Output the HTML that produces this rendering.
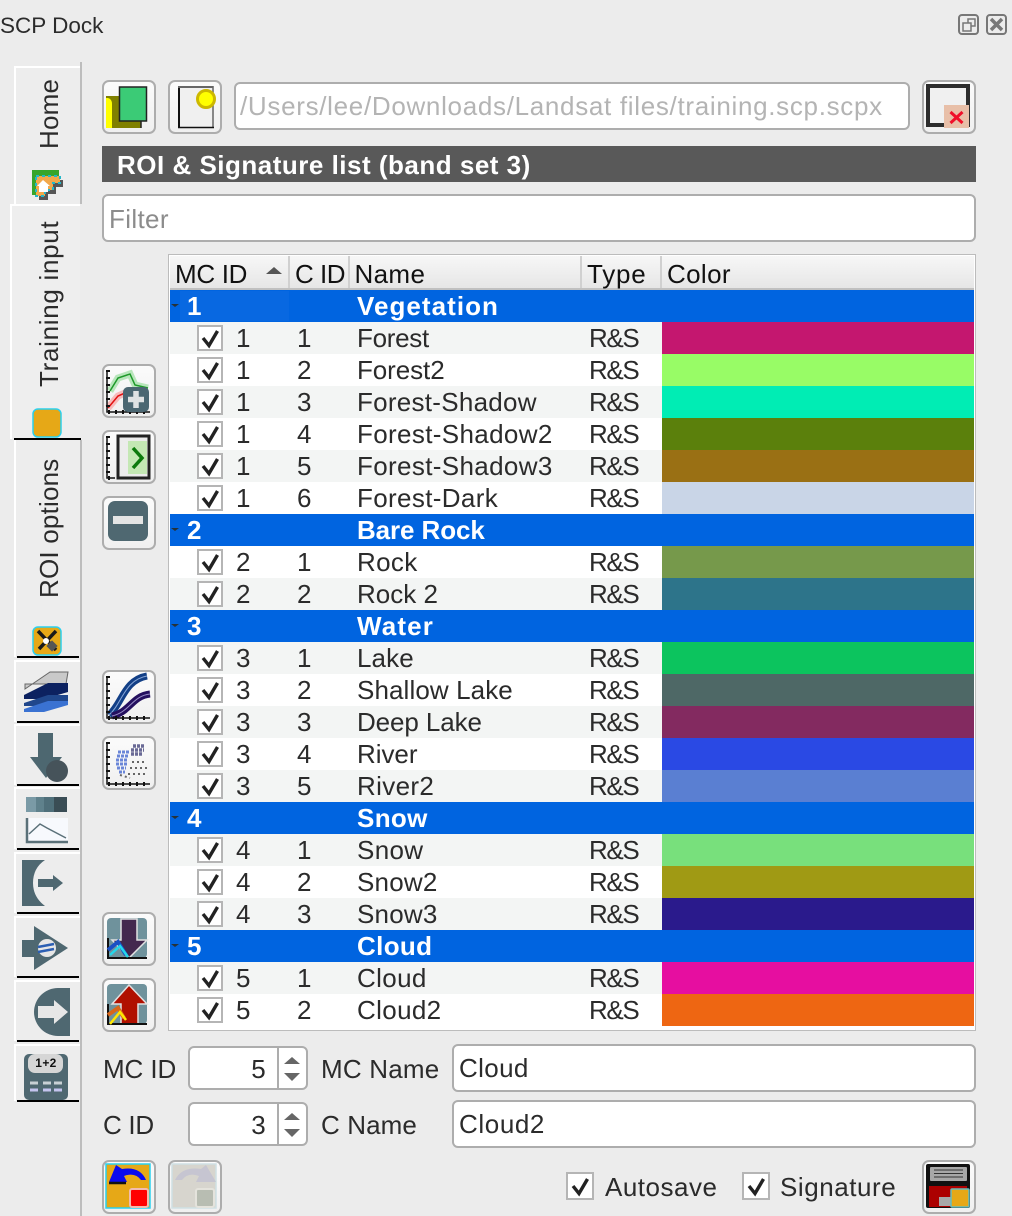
<!DOCTYPE html>
<html><head><meta charset="utf-8"><style>
html,body{margin:0;padding:0}
body{width:1012px;height:1216px;overflow:hidden;background:#ececec;position:relative;font-family:"Liberation Sans",sans-serif;font-size:26px;color:#2b2b2b;letter-spacing:.35px}
.a{position:absolute}
.btn{position:absolute;width:50px;height:50px;border:2px solid #adadad;border-radius:7px;background:linear-gradient(#fbfbfb,#f0f0f0)}
.in{position:absolute;box-sizing:border-box;border:2px solid #adadad;border-radius:6px;background:#fff;line-height:44px;padding-left:5px;color:#2b2b2b}
.r{position:absolute;left:170px;width:804px;height:32px;line-height:32px}
.r span{position:absolute;white-space:pre}
.g{background:#f3f5f4}.w{background:#fff}
.h{background:#0064e0;color:#fff;font-weight:bold}
.m{left:66px}.c{left:127px}.n{left:187px}.t{left:419px;letter-spacing:-1.4px}
.h .m{left:17px}
.k{left:492px;width:312px;height:32px}
.x{left:27px;top:3px;width:22px;height:22px;border:2px solid #b5b5b5;background:#fff}
.ck{position:absolute;box-sizing:border-box;width:28px;height:28px;border:2px solid #b5b5b5;background:#fff}
.hd{position:absolute;top:258px;line-height:32px;color:#111;white-space:pre}
.v{position:absolute;writing-mode:vertical-rl;transform:rotate(180deg);white-space:pre;line-height:30px}
.tab{position:absolute;box-sizing:border-box;border-left:2px solid #fff;border-top:2px solid #fff;background:#ededed}
.ln{position:absolute;height:2px;background:#000}
</style></head><body>
<div class="a" style="left:0;top:12px;font-size:22.5px;line-height:28px;letter-spacing:0">SCP Dock</div>

<!-- side tabs -->
<div class="tab" style="left:14px;top:66px;width:66px;height:138px"></div>
<div class="tab" style="left:10px;top:204px;width:70px;height:235px;background:#eeeeee"></div>
<div class="tab" style="left:14px;top:439px;width:66px;height:218px;border-top:0"></div>
<div class="tab" style="left:14px;top:660px;width:66px;height:62px"></div>
<div class="tab" style="left:14px;top:724px;width:66px;height:61px"></div>
<div class="tab" style="left:14px;top:787px;width:66px;height:62px"></div>
<div class="tab" style="left:14px;top:852px;width:66px;height:61px"></div>
<div class="tab" style="left:14px;top:916px;width:66px;height:61px"></div>
<div class="tab" style="left:14px;top:980px;width:66px;height:61px"></div>
<div class="tab" style="left:14px;top:1044px;width:66px;height:57px"></div>
<div class="a" style="left:80px;top:62px;width:1.5px;height:142px;background:#bdbdbd"></div>
<div class="a" style="left:80px;top:440px;width:1.5px;height:776px;background:#bdbdbd"></div>
<div class="ln" style="left:14px;top:438px;width:67px"></div>
<div class="ln" style="left:17px;top:656px;width:62px"></div>
<div class="ln" style="left:17px;top:721px;width:62px"></div>
<div class="ln" style="left:17px;top:784px;width:62px"></div>
<div class="ln" style="left:17px;top:848px;width:62px"></div>
<div class="ln" style="left:17px;top:912px;width:62px"></div>
<div class="ln" style="left:17px;top:976px;width:62px"></div>
<div class="ln" style="left:17px;top:1040px;width:62px"></div>
<div class="ln" style="left:17px;top:1100px;width:62px"></div>
<div class="v" style="left:34px;top:79px;height:70px;letter-spacing:.2px">Home</div>
<div class="v" style="left:34px;top:221px;height:166px;letter-spacing:.7px">Training input</div>
<div class="v" style="left:34px;top:459px;height:139px;letter-spacing:.2px">ROI options</div>

<!-- buttons -->
<div class="btn" style="left:102px;top:80px"></div>
<div class="btn" style="left:168px;top:80px"></div>
<div class="btn" style="left:922px;top:80px"></div>
<div class="btn" style="left:102px;top:364px"></div>
<div class="btn" style="left:102px;top:430px"></div>
<div class="btn" style="left:102px;top:496px"></div>
<div class="btn" style="left:102px;top:670px"></div>
<div class="btn" style="left:102px;top:736px"></div>
<div class="btn" style="left:102px;top:912px"></div>
<div class="btn" style="left:102px;top:978px"></div>
<div class="btn" style="left:102px;top:1160px"></div>
<div class="btn" style="left:168px;top:1160px"></div>
<div class="btn" style="left:922px;top:1160px"></div>

<div class="in" style="left:234px;top:82px;width:676px;height:48px;color:#b4b4b4;letter-spacing:.69px;padding-left:4px">/Users/lee/Downloads/Landsat files/training.scp.scpx</div>
<div class="a" style="left:102px;top:146px;width:874px;height:36px;background:#595959;color:#fff;font-weight:bold;line-height:38px;text-indent:15px;letter-spacing:.5px">ROI &amp; Signature list (band set 3)</div>
<div class="in" style="left:102px;top:194px;width:874px;height:48px;color:#8c8c8c;line-height:46px">Filter</div>

<!-- table -->
<div class="a" style="left:168px;top:254px;width:806px;height:775px;border:1px solid #bcbcbc;background:#fff"></div>
<div class="a" style="left:170px;top:256px;width:804px;height:32px;background:linear-gradient(#f7f7f7,#e6e6e6);border-bottom:2px solid #c0c0c0"></div>
<div class="a" style="left:288px;top:256px;width:2px;height:32px;background:#d0d0d0"></div>
<div class="a" style="left:348px;top:256px;width:2px;height:32px;background:#d0d0d0"></div>
<div class="a" style="left:580px;top:256px;width:2px;height:32px;background:#d0d0d0"></div>
<div class="a" style="left:660px;top:256px;width:2px;height:32px;background:#d0d0d0"></div>
<div class="hd" style="left:175px;letter-spacing:-.3px">MC ID</div>
<div class="hd" style="left:295px;letter-spacing:-.5px">C ID</div>
<div class="hd" style="left:354.500px">Name</div>
<div class="hd" style="left:587px;letter-spacing:.8px">Type</div>
<div class="hd" style="left:667px">Color</div>

<div class="r h" style="top:290px"><span class="m">1</span><span class="n" style="letter-spacing:1.05px">Vegetation</span></div>
<div class="r g" style="top:322px"><span class="x"></span><span class="m">1</span><span class="c">1</span><span class="n" style="letter-spacing:-.3px">Forest</span><span class="t">R&amp;S</span><span class="k" style="background:#c4176f"></span></div>
<div class="r w" style="top:354px"><span class="x"></span><span class="m">1</span><span class="c">2</span><span class="n" style="letter-spacing:-.08px">Forest2</span><span class="t">R&amp;S</span><span class="k" style="background:#98fc66"></span></div>
<div class="r g" style="top:386px"><span class="x"></span><span class="m">1</span><span class="c">3</span><span class="n" style="letter-spacing:.27px">Forest-Shadow</span><span class="t">R&amp;S</span><span class="k" style="background:#00edb4"></span></div>
<div class="r w" style="top:418px"><span class="x"></span><span class="m">1</span><span class="c">4</span><span class="n">Forest-Shadow2</span><span class="t">R&amp;S</span><span class="k" style="background:#5b800c"></span></div>
<div class="r g" style="top:450px"><span class="x"></span><span class="m">1</span><span class="c">5</span><span class="n">Forest-Shadow3</span><span class="t">R&amp;S</span><span class="k" style="background:#9a7014"></span></div>
<div class="r w" style="top:482px"><span class="x"></span><span class="m">1</span><span class="c">6</span><span class="n">Forest-Dark</span><span class="t">R&amp;S</span><span class="k" style="background:#c9d5e7"></span></div>
<div class="r h" style="top:514px"><span class="m">2</span><span class="n" style="letter-spacing:-.1px">Bare Rock</span></div>
<div class="r w" style="top:546px"><span class="x"></span><span class="m">2</span><span class="c">1</span><span class="n">Rock</span><span class="t">R&amp;S</span><span class="k" style="background:#76994b"></span></div>
<div class="r g" style="top:578px"><span class="x"></span><span class="m">2</span><span class="c">2</span><span class="n" style="letter-spacing:0">Rock 2</span><span class="t">R&amp;S</span><span class="k" style="background:#2d748a"></span></div>
<div class="r h" style="top:610px"><span class="m">3</span><span class="n" style="letter-spacing:1.15px">Water</span></div>
<div class="r g" style="top:642px"><span class="x"></span><span class="m">3</span><span class="c">1</span><span class="n" style="letter-spacing:.1px">Lake</span><span class="t">R&amp;S</span><span class="k" style="background:#0cc45e"></span></div>
<div class="r w" style="top:674px"><span class="x"></span><span class="m">3</span><span class="c">2</span><span class="n" style="letter-spacing:.1px">Shallow Lake</span><span class="t">R&amp;S</span><span class="k" style="background:#4e6866"></span></div>
<div class="r g" style="top:706px"><span class="x"></span><span class="m">3</span><span class="c">3</span><span class="n" style="letter-spacing:-.1px">Deep Lake</span><span class="t">R&amp;S</span><span class="k" style="background:#832a60"></span></div>
<div class="r w" style="top:738px"><span class="x"></span><span class="m">3</span><span class="c">4</span><span class="n" style="letter-spacing:-.05px">River</span><span class="t">R&amp;S</span><span class="k" style="background:#2a49e4"></span></div>
<div class="r g" style="top:770px"><span class="x"></span><span class="m">3</span><span class="c">5</span><span class="n">River2</span><span class="t">R&amp;S</span><span class="k" style="background:#5a7fd2"></span></div>
<div class="r h" style="top:802px"><span class="m">4</span><span class="n">Snow</span></div>
<div class="r g" style="top:834px"><span class="x"></span><span class="m">4</span><span class="c">1</span><span class="n">Snow</span><span class="t">R&amp;S</span><span class="k" style="background:#78e07c"></span></div>
<div class="r w" style="top:866px"><span class="x"></span><span class="m">4</span><span class="c">2</span><span class="n" style="letter-spacing:.2px">Snow2</span><span class="t">R&amp;S</span><span class="k" style="background:#a09a14"></span></div>
<div class="r g" style="top:898px"><span class="x"></span><span class="m">4</span><span class="c">3</span><span class="n" style="letter-spacing:.2px">Snow3</span><span class="t">R&amp;S</span><span class="k" style="background:#2a1a8c"></span></div>
<div class="r h" style="top:930px"><span class="m">5</span><span class="n">Cloud</span></div>
<div class="r g" style="top:962px"><span class="x"></span><span class="m">5</span><span class="c">1</span><span class="n">Cloud</span><span class="t">R&amp;S</span><span class="k" style="background:#e60ea0"></span></div>
<div class="r w" style="top:994px"><span class="x"></span><span class="m">5</span><span class="c">2</span><span class="n">Cloud2</span><span class="t">R&amp;S</span><span class="k" style="background:#ee6612"></span></div>

<!-- form -->
<div class="a" style="left:103px;top:1047px;line-height:44px;letter-spacing:-.1px">MC ID</div>
<div class="a" style="left:103px;top:1103px;line-height:44px;letter-spacing:-.3px">C ID</div>
<div class="a" style="left:321px;top:1047px;line-height:44px;letter-spacing:.2px">MC Name</div>
<div class="a" style="left:321px;top:1103px;line-height:44px;letter-spacing:.1px">C Name</div>
<div class="in" style="left:188px;top:1046px;width:120px;height:44px;line-height:42px;padding:0 40px 0 0;text-align:right">5</div>
<div class="in" style="left:188px;top:1102px;width:120px;height:44px;line-height:42px;padding:0 40px 0 0;text-align:right">3</div>
<div class="a" style="left:277px;top:1048px;width:2px;height:40px;background:#adadad"></div>
<div class="a" style="left:277px;top:1104px;width:2px;height:40px;background:#adadad"></div>
<div class="in" style="left:452px;top:1044px;width:524px;height:48px">Cloud</div>
<div class="in" style="left:452px;top:1100px;width:524px;height:48px;letter-spacing:.6px">Cloud2</div>

<div class="ck" style="left:566px;top:1172px"></div>
<div class="ck" style="left:742px;top:1172px"></div>
<div class="a" style="left:605px;top:1171px;line-height:32px;letter-spacing:.5px">Autosave</div>
<div class="a" style="left:780px;top:1171px;line-height:32px;letter-spacing:.55px">Signature</div>

<!-- icons overlay -->
<svg class="a" style="left:0;top:0" width="1012" height="1216" viewBox="0 0 1012 1216" fill="none">
<defs>
<path id="chk" d="M-7 -1 L-1 6.500 L7.500 -8" stroke="#222" stroke-width="3.400" fill="none"/>
<path id="arr" d="M0 0h8l-4 3z" fill="#263238"/>
</defs>
<!-- row checks -->
<use href="#chk" x="210" y="339"/><use href="#chk" x="210" y="371"/><use href="#chk" x="210" y="403"/><use href="#chk" x="210" y="435"/><use href="#chk" x="210" y="467"/><use href="#chk" x="210" y="499"/>
<use href="#chk" x="210" y="563"/><use href="#chk" x="210" y="595"/>
<use href="#chk" x="210" y="659"/><use href="#chk" x="210" y="691"/><use href="#chk" x="210" y="723"/><use href="#chk" x="210" y="755"/><use href="#chk" x="210" y="787"/>
<use href="#chk" x="210" y="851"/><use href="#chk" x="210" y="883"/><use href="#chk" x="210" y="915"/>
<use href="#chk" x="210" y="979"/><use href="#chk" x="210" y="1011"/>
<use href="#chk" x="580" y="1187"/><use href="#chk" x="756" y="1187"/>
<!-- tree arrows -->
<use href="#arr" x="171" y="304"/><use href="#arr" x="171" y="528"/><use href="#arr" x="171" y="624"/><use href="#arr" x="171" y="816"/><use href="#arr" x="171" y="944"/>
<rect x="180" y="291" width="109" height="30" fill="#fff" opacity=".03"/>
<!-- sort arrow -->
<path d="M266 274 L274 267 L282 274z" fill="#555"/>
<!-- spin arrows -->
<path d="M284 1064 L292 1057 L300 1064z M284 1073 L300 1073 L292 1081z M284 1120 L292 1113 L300 1120z M284 1129 L300 1129 L292 1137z" fill="#666"/>

<!-- window buttons -->
<rect x="959" y="15" width="19" height="19" rx="3" fill="none" stroke="#777" stroke-width="2"/>
<rect x="968" y="19" width="7" height="7" fill="none" stroke="#777" stroke-width="1.500"/><rect x="963" y="23" width="8" height="8" fill="#ececec" stroke="#777" stroke-width="1.500"/>
<rect x="987" y="15" width="19" height="19" rx="3" fill="none" stroke="#777" stroke-width="2"/>
<path d="M991 19 L1002 30 M1002 19 L991 30" stroke="#777" stroke-width="3.500"/>

<!-- btn1 -->
<path d="M106 96 H141 V128 H106z" fill="#808000"/>
<path d="M106 98 H108 Q112 99 112 104 V128 H106z" fill="#ffff00"/>
<path d="M141 120 V128" stroke="#222" stroke-width="1.500"/>
<rect x="119.500" y="87" width="27" height="34" fill="#3bcb76" stroke="#222" stroke-width="1.500"/>
<!-- btn2 -->
<rect x="178" y="86" width="36" height="42" fill="#f0f0f0"/>
<path d="M179 128 V86" stroke="#111" stroke-width="2"/><path d="M178 87 H213" stroke="#666" stroke-width="2"/><path d="M213 86 V128" stroke="#666" stroke-width="1.500"/><path d="M178 127.500 H214" stroke="#111" stroke-width="1.500"/>
<circle cx="206" cy="99" r="8.500" fill="#ffff00" stroke="#cdb800" stroke-width="3"/>
<!-- btn3 -->
<rect x="928" y="86" width="40" height="39" fill="#f0f0f0" stroke="#2d2d2d" stroke-width="4"/>
<rect x="944" y="105" width="25" height="23" fill="#e8bfa8"/>
<path d="M950.500 112 L962.500 123 M962.500 112 L950.500 123" stroke="#f0102a" stroke-width="3"/>

<!-- home tab icon -->
<path d="M32 170 H59 V176 H36 V195 H32z" fill="#37a52a"/>
<path d="M39 180 H63 V187 H56 V194 H48 V200 H39z" fill="#555"/>
<path d="M36 176 H60 V183 H53 V190 H45 V196 H36z" fill="#f2a84a"/>
<path d="M36 176 H60 V183 H53 V190 H45 V196 H36z" stroke="#23b7c9" stroke-width="2" stroke-dasharray="3 3"/>
<path d="M43 180 L37 186 H39 V192 H48 V186 H50z" fill="#fff"/>
<!-- training tab icon -->
<rect x="33" y="409" width="28" height="28" rx="5" fill="#e6a817" stroke="#2ad0ee" stroke-width="1.500"/>
<!-- roi tab icon -->
<rect x="33" y="627" width="28" height="28" rx="5" fill="#e6a817" stroke="#2ad0ee" stroke-width="1.500"/>
<path d="M38 631 L56 650 M56 631 L39 649" stroke="#1a1a1a" stroke-width="3.500"/>
<circle cx="46" cy="641" r="3" fill="#fff"/>
<rect x="48" y="642" width="8" height="8" fill="#555" transform="rotate(45 52 646)"/>

<!-- layers -->
<path d="M25 689 L50 672 H68 L66 684 H25z" fill="#c9c9c9" stroke="#666" stroke-width="1"/>
<path d="M24 695 L48 683 H68 V692 L44 699 H24z" fill="#0c2160"/>
<path d="M24 703 L48 695 H68 V701 L44 706 H24z" fill="#20478c"/>
<path d="M24 709 L48 701 H68 V705 L44 712 H24z" fill="#3a72d2"/>
<!-- download -->
<path d="M38 733 H53 V757 H62 L46 778 L30 757 H38z" fill="#4d6770"/>
<circle cx="57" cy="771" r="11" fill="#46535a"/>
<!-- band calc -->
<rect x="26" y="797" width="41" height="15" fill="#7a9aa6"/><rect x="36" y="797" width="8" height="15" fill="#5f818c"/><rect x="44" y="797" width="10" height="15" fill="#4f6f7a"/><rect x="54" y="797" width="13" height="15" fill="#3a4d55"/>
<rect x="26" y="818" width="42" height="24" fill="#f7f9fd"/>
<path d="M27 818 V842 H68" stroke="#5a7078" stroke-width="2.500"/>
<path d="M29 834 L40 824 L47 828 L66 838" stroke="#5a7078" stroke-width="1.500"/>
<!-- postproc -->
<path d="M22 860 H45 Q33 868 33 883 Q33 897 45 906 H22z" fill="#4f6871"/>
<path d="M38 879 H53 V875 L63 883 L53 891 V887 H38z" fill="#4f6871"/>
<!-- arrow-tri -->
<path d="M34 926 L68 948 L34 970 V957 H22 V940 H34z" fill="#4f6871"/>
<circle cx="47" cy="948" r="9" fill="#e7e7e7"/><path d="M38 947 L54 944 M38 952 L54 949" stroke="#2c5fb3" stroke-width="2.500"/>
<!-- next arrow -->
<path d="M70 988 H58 A24 24 0 1 0 58 1036 H70z" fill="#4f6871"/>
<path d="M38 1006 H54 V1000 L68 1012 L54 1024 V1018 H38z" fill="#e7e7e7"/>
<!-- calculator -->
<rect x="24" y="1054" width="44" height="46" rx="5" fill="#4f6871"/>
<rect x="28" y="1054" width="35" height="19" rx="7" fill="#d6d6d6"/>
<text x="46" y="1067" font-family="Liberation Sans,sans-serif" font-size="12" font-weight="bold" text-anchor="middle" fill="#111">1+2</text>
<path d="M30 1083 H38 M43 1083 H51 M54 1083 H62" stroke="#c8d0d4" stroke-width="3"/>
<path d="M30 1090 H38 M43 1090 H51 M54 1090 H62" stroke="#c4c4ee" stroke-width="3"/>

<!-- spectral add -->
<path d="M110 391 L118 378 L130 374 L135 385 L148 388" stroke="#b8e6bb" stroke-width="7"/>
<path d="M110 391 L118 378 L130 374 L135 385 L148 388" stroke="#1e9a2a" stroke-width="1.500"/>
<path d="M108 408 L118 396 L132 390" stroke="#f7bcbc" stroke-width="7"/>
<path d="M108 408 L118 396 L132 390" stroke="#e31212" stroke-width="1.500"/>
<path d="M107 370 V412 H150" stroke="#111" stroke-width="1.500"/><path d="M108 370 V412 H150" stroke="#111" stroke-width="4" stroke-dasharray="2 5"/>
<rect x="123" y="387" width="26" height="25" rx="5" fill="#4b6772"/>
<path d="M136 391 V408 M128 399.500 H144" stroke="#dfe2e3" stroke-width="5.500"/>
<!-- btn import -->
<path d="M107 436 V478 H115" stroke="#111" stroke-width="1.500"/><path d="M108 436 V478 H115" stroke="#111" stroke-width="4" stroke-dasharray="2 5"/>
<rect x="118" y="436" width="31" height="42" fill="#ececec" stroke="#222" stroke-width="3"/>
<rect x="128" y="441" width="19" height="33" fill="#c4e8b4"/>
<path d="M133 448 L142 458 L133 468" stroke="#0d7a0d" stroke-width="3.500"/>
<!-- minus -->
<rect x="108" y="501" width="40" height="40" rx="7" fill="#4f6871"/>
<rect x="113" y="516" width="30" height="8" fill="#e4e4e4"/>
<!-- spectral plot -->
<path d="M109 715 C122 704 124 680 147 676" stroke="#123f86" stroke-width="7"/>
<path d="M109 715 C122 704 124 680 147 676" stroke="#8aa8d8" stroke-width="1"/>
<path d="M112 716 C130 712 132 696 150 694" stroke="#25105f" stroke-width="7"/>
<path d="M112 716 C130 712 132 696 150 694" stroke="#9a90c8" stroke-width="1"/>
<path d="M107 676 V718 H150" stroke="#111" stroke-width="1.500"/><path d="M108 676 V718 H150" stroke="#111" stroke-width="4" stroke-dasharray="2 5"/>
<!-- scatter -->
<path d="M107 742 V784 H150" stroke="#111" stroke-width="1.500"/><path d="M108 742 V784 H150" stroke="#111" stroke-width="4" stroke-dasharray="2 5"/>
<path d="M118 752 H129 M117 756 H129 M116 760 H128 M116 764 H127 M117 768 H126 M119 772 H125" stroke="#6a86d8" stroke-width="3" stroke-dasharray="3 1"/>
<path d="M133 746 H144 M131 750 H144 M131 754 H143" stroke="#6a6a96" stroke-width="3.500" stroke-dasharray="3 1"/>
<path d="M120 775 L130 778 M132 762 H146 M130 768 H148 M128 774 H146" stroke="#666" stroke-width="2" stroke-dasharray="2 3"/>
<!-- download signature -->
<rect x="107" y="918" width="40" height="40" rx="4" fill="#6f929c"/>
<path d="M121 919 H137 V940 H147 L129 958 L112 940 H121z" fill="#43284e" stroke="#e2e2e2" stroke-width="1.500"/>
<path d="M108 938 V958 H147" stroke="#111" stroke-width="2"/>
<path d="M108 950 L118 942 L126 955" stroke="#1b50c4" stroke-width="4"/>
<path d="M110 955 L120 946 L128 957" stroke="#23d7ea" stroke-width="2.500"/>
<!-- upload signature -->
<rect x="107" y="984" width="40" height="40" rx="4" fill="#6f929c"/>
<path d="M129 985 L147 1004 H138 V1024 H121 V1004 H112z" fill="#b01000" stroke="#e2e2e2" stroke-width="1.500"/>
<path d="M108 1004 V1024 H147" stroke="#111" stroke-width="2"/>
<path d="M108 1015 L118 1008 L124 1018" stroke="#d8661a" stroke-width="4"/>
<path d="M110 1024 L120 1012 L126 1020" stroke="#ffe600" stroke-width="2.500"/>
<!-- undo -->
<rect x="106" y="1164" width="44" height="44" fill="#e6a817" stroke="#29d1ef" stroke-width="1.500"/>
<path d="M116 1165 L109 1182 H127 L124 1176 Q135 1172 141 1180 L146 1180 Q140 1166 122 1169z" fill="#0a0aee"/>
<path d="M109 1183 H126" stroke="#111" stroke-width="2.500"/>
<rect x="130" y="1189" width="18" height="18" rx="2" fill="#ff0000" stroke="#f2bcae" stroke-width="2"/>
<!-- redo disabled -->
<rect x="172" y="1164" width="44" height="44" fill="#d7d5ce" stroke="#cfe0e4" stroke-width="1.500"/>
<path d="M206 1165 L216 1182 H196 L199 1176 Q188 1172 182 1180 L175 1180 Q182 1166 201 1169z" fill="#c6c5d1"/>
<rect x="196" y="1189" width="18" height="18" rx="2" fill="#b8bdb2" stroke="#e4e3dc" stroke-width="2"/>
<!-- save -->
<rect x="926" y="1164" width="44" height="44" rx="2" fill="#111"/>
<rect x="930" y="1167" width="37" height="14" rx="1" fill="#a8a8a8"/>
<path d="M934 1170 H963 M934 1173.500 H963 M934 1177 H963" stroke="#333" stroke-width="1"/>
<rect x="929" y="1186" width="38" height="21" fill="#ac0000"/>
<rect x="939" y="1197" width="14" height="9" fill="#a8a8a8"/>
<rect x="951" y="1189" width="18" height="18" rx="1" fill="#e6a817" stroke="#63bcc0" stroke-width="1.500"/>
</svg>
</body></html>
